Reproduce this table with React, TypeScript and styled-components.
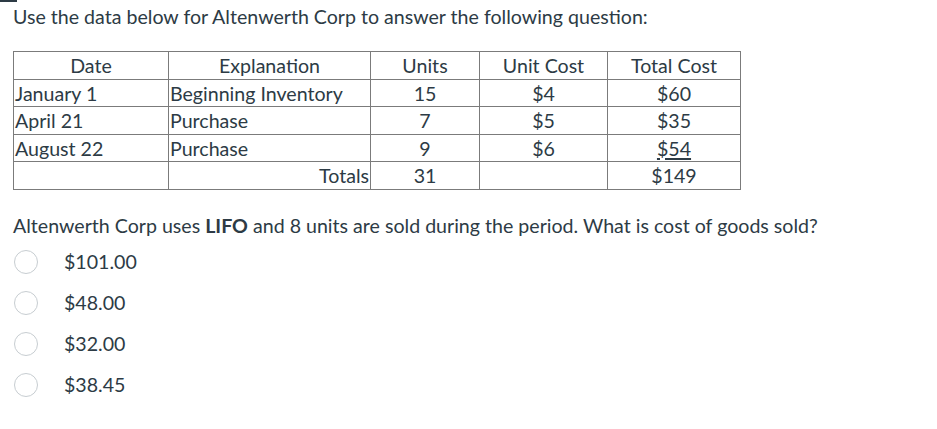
import styled, { createGlobalStyle } from "styled-components";

const GlobalStyle = createGlobalStyle`
    body {
        margin: 0;
        background: #ffffff;
        font-family: Lato, "Open Sans", sans-serif;
        color: #2d3b45;
    }
`;

const Page = styled.div`
    position: relative;
    width: 937px;
    height: 429px;
    padding: 6px 0 0 13px;
    box-sizing: border-box;
    overflow: hidden;
`;

const CornerMark = styled.div`
    position: absolute;
    top: 0;
    left: 0;
    width: 17px;
    height: 2px;
    background: #2d3b45;
`;

const Prompt = styled.p`
    margin: 0;
    font-size: 19.6px;
    line-height: 22px;
`;

const DataTable = styled.table`
    margin-top: 23px;
    border-collapse: collapse;
    font-size: 19.6px;
    table-layout: fixed;
    width: 728px;
`;

const HeadCell = styled.th<{ w: number }>`
    box-sizing: border-box;
    width: ${(p) => p.w}px;
    border: 1px solid #7b7b7b;
    font-weight: 400;
    height: 27.5px;
    padding: 2px 0 0;
    text-align: center;
    line-height: 22px;
`;

const Cell = styled.td<{ align?: string }>`
    box-sizing: border-box;
    border: 1px solid #7b7b7b;
    height: 27.5px;
    padding: 2px 1px 0;
    text-align: ${(p) => p.align || "center"};
    line-height: 22px;
    white-space: nowrap;
`;

const Underlined = styled.span`
    text-decoration: underline;
    text-decoration-thickness: 2px;
    text-underline-offset: 2px;
`;

const Question = styled.p`
    margin: 25px 0 0;
    font-size: 19.6px;
    line-height: 22px;
`;

const Options = styled.div`
    display: flex;
    flex-direction: column;
    gap: 17px;
    margin-top: 13px;
`;

const Option = styled.label`
    display: flex;
    align-items: center;
    font-size: 19.6px;
    line-height: 24px;
`;

const Radio = styled.span`
    width: 24px;
    height: 24px;
    border: 1px solid #c7cdd1;
    border-radius: 50%;
    box-sizing: border-box;
    margin-left: 1px;
    margin-right: 26px;
    flex-shrink: 0;
`;

const rows = [
    { date: "January 1", expl: "Beginning Inventory", units: "15", unit: "$4", total: "$60" },
    { date: "April 21", expl: "Purchase", units: "7", unit: "$5", total: "$35" },
    { date: "August 22", expl: "Purchase", units: "9", unit: "$6", total: "$54" },
];

const answers = ["$101.00", "$48.00", "$32.00", "$38.45"];

function App() {
    return (
        <>
            <GlobalStyle />
            <Page>
                <CornerMark />
                <Prompt>Use the data below for Altenwerth Corp to answer the following question:</Prompt>
                <DataTable>
                    <thead>
                        <tr>
                            <HeadCell w={155}>Date</HeadCell>
                            <HeadCell w={202}>Explanation</HeadCell>
                            <HeadCell w={109}>Units</HeadCell>
                            <HeadCell w={128}>Unit Cost</HeadCell>
                            <HeadCell w={133}>Total Cost</HeadCell>
                        </tr>
                    </thead>
                    <tbody>
                        {rows.map((r, i) => (
                            <tr key={r.date}>
                                <Cell align="left">{r.date}</Cell>
                                <Cell align="left">{r.expl}</Cell>
                                <Cell>{r.units}</Cell>
                                <Cell>{r.unit}</Cell>
                                <Cell>{i === rows.length - 1 ? <Underlined>{r.total}</Underlined> : r.total}</Cell>
                            </tr>
                        ))}
                        <tr>
                            <Cell />
                            <Cell align="right">Totals</Cell>
                            <Cell>31</Cell>
                            <Cell />
                            <Cell>$149</Cell>
                        </tr>
                    </tbody>
                </DataTable>
                <Question>
                    Altenwerth Corp uses <strong>LIFO</strong> and 8 units are sold during the period. What is cost of goods sold?
                </Question>
                <Options>
                    {answers.map((a) => (
                        <Option key={a}>
                            <Radio />
                            {a}
                        </Option>
                    ))}
                </Options>
            </Page>
        </>
    );
}

export default App;
